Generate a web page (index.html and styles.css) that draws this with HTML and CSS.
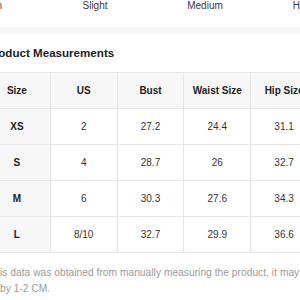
FILE: index.html
```html
<!DOCTYPE html>
<html lang="en">

<head>
    <meta charset="UTF-8">
    <meta name="viewport" content="width=device-width, initial-scale=1.0">
    <title>Product Measurements</title>
    <link rel="stylesheet" href="styles.css">
</head>

<body>
    <div class="stretch-scale">
        <span>Non</span>
        <span>Slight</span>
        <span>Medium</span>
        <span>High</span>
    </div>
    <div class="divider"></div>
    <div class="container">
        <h2 class="title">Product Measurements</h2>
        <table class="size-table">
            <thead>
                <tr>
                    <th>Size</th>
                    <th>US</th>
                    <th>Bust</th>
                    <th>Waist Size</th>
                    <th>Hip Size</th>
                </tr>
            </thead>
            <tbody>
                <tr>
                    <th>XS</th>
                    <td>2</td>
                    <td>27.2</td>
                    <td>24.4</td>
                    <td>31.1</td>
                </tr>
                <tr>
                    <th>S</th>
                    <td>4</td>
                    <td>28.7</td>
                    <td>26</td>
                    <td>32.7</td>
                </tr>
                <tr>
                    <th>M</th>
                    <td>6</td>
                    <td>30.3</td>
                    <td>27.6</td>
                    <td>34.3</td>
                </tr>
                <tr>
                    <th>L</th>
                    <td>8/10</td>
                    <td>32.7</td>
                    <td>29.9</td>
                    <td>36.6</td>
                </tr>
            </tbody>
        </table>
        <p class="note">This data was obtained from manually measuring the product, it may vary by 1-2 CM.</p>
    </div>
</body>

</html>
```

FILE: styles.css
```css
body,
html {
    margin: 0;
    padding: 0;
    font-family: "Liberation Sans", Arial, sans-serif;
    background-color: #fff;
    overflow: hidden;
}

.stretch-scale {
    display: grid;
    grid-template-columns: 104px 100px 120px 76px;
    margin-left: -59px;
    height: 27px;
    font-size: 10px;
    line-height: 12px;
    color: #3a3a3a;
}

.stretch-scale span {
    text-align: center;
}

.divider {
    height: 7px;
    background-color: #f6f6f6;
}

.container {
    width: 335px;
    margin-left: -17px;
}

.title {
    margin: 0 0 0 3px;
    padding: 12px 0 0;
    height: 26px;
    font-size: 11.6px;
    line-height: 14px;
    font-weight: bold;
    color: #222;
}

.size-table {
    width: 335px;
    border-collapse: collapse;
    table-layout: fixed;
    font-size: 10px;
    color: #333;
}

.size-table th,
.size-table td {
    height: 35px;
    padding: 0;
    border: 1px solid #e6e6e6;
    text-align: center;
}

.size-table th {
    font-weight: bold;
    color: #222;
    background-color: #f7f7f7;
}

.note {
    width: 335px;
    margin: 12px 0 0 17px;
    text-indent: -12px;
    font-size: 10.2px;
    letter-spacing: 0.04px;
    line-height: 16px;
    color: #999;
}
```
